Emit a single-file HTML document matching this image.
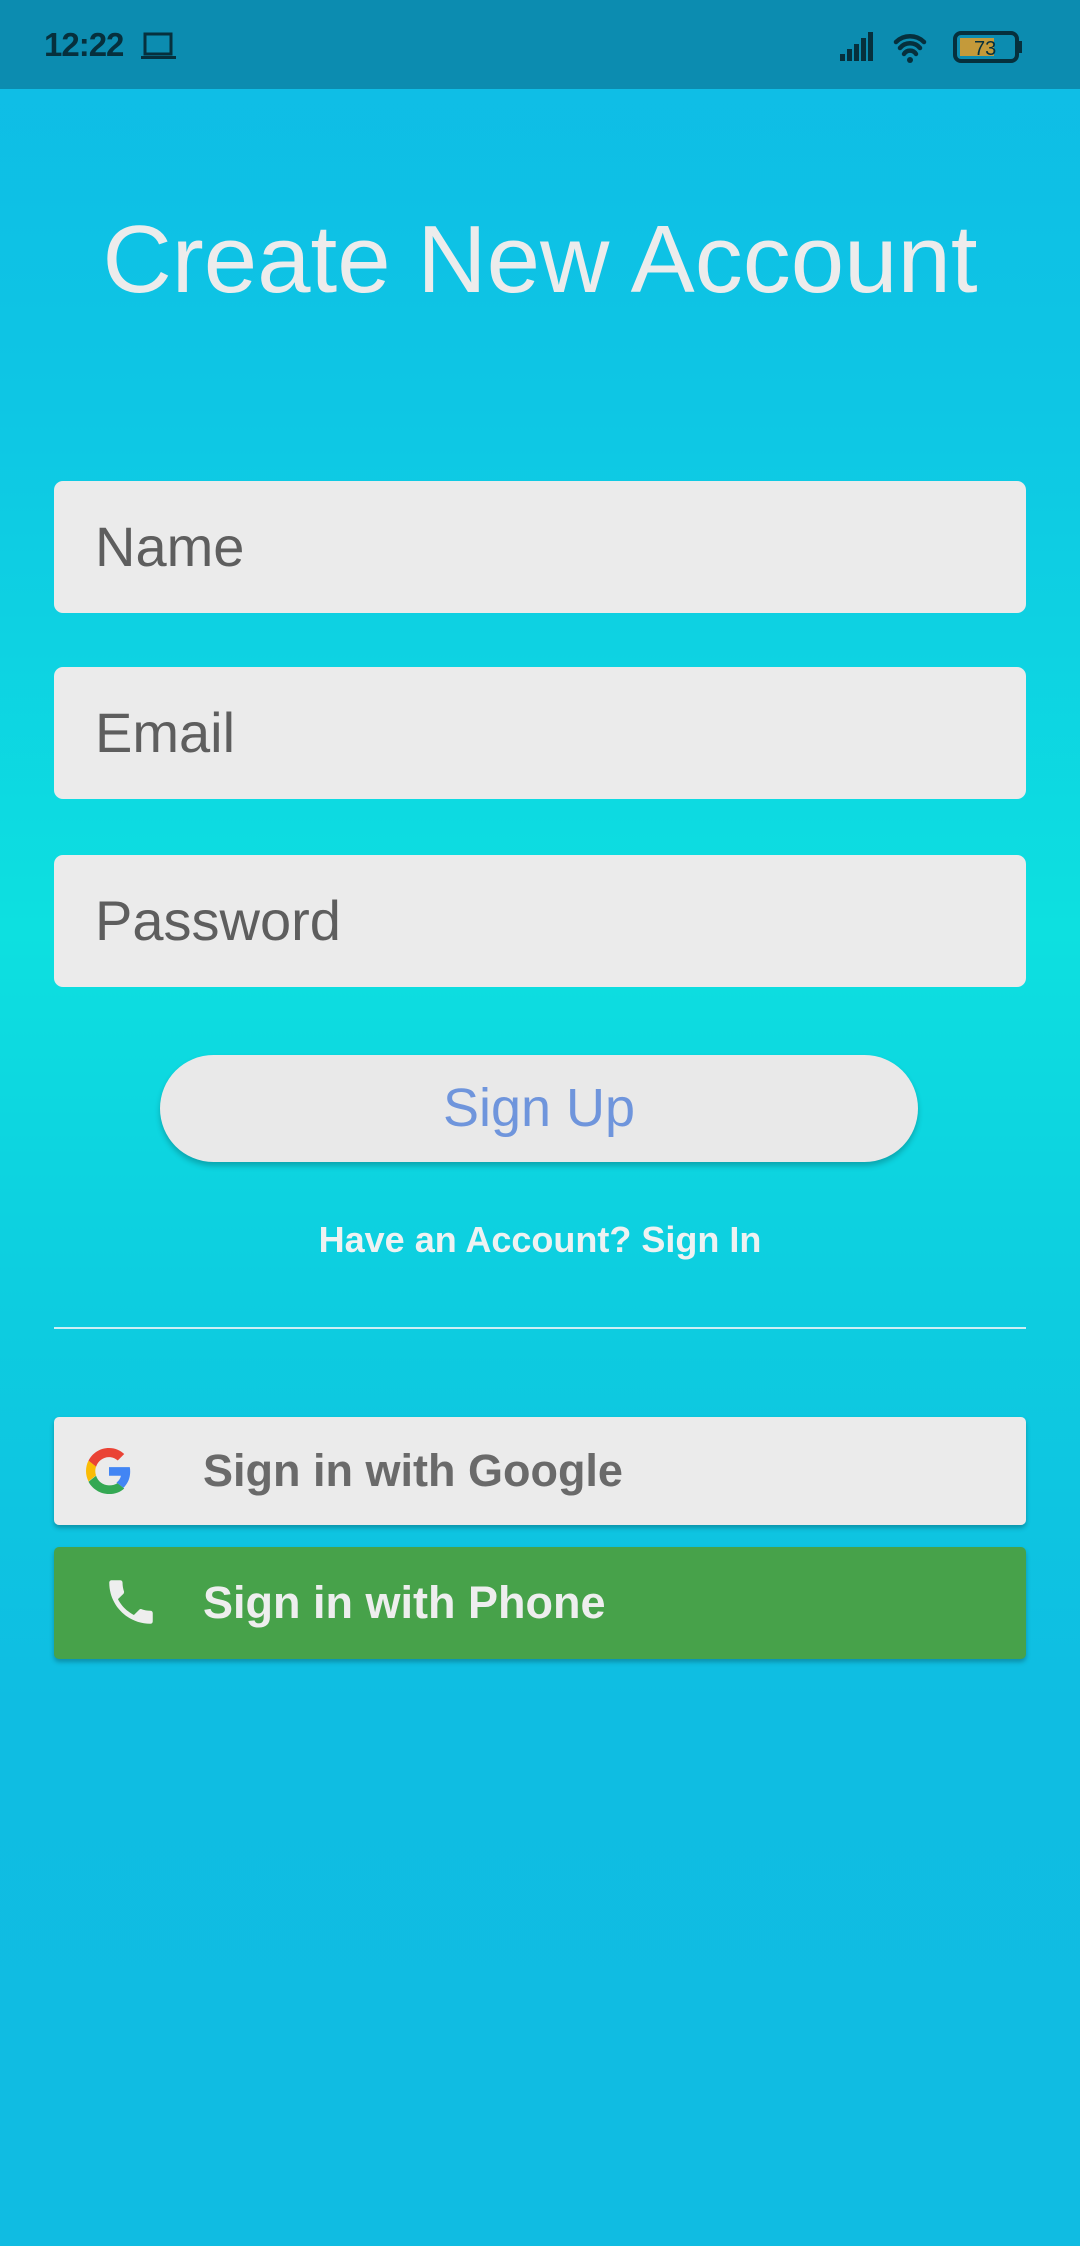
<!DOCTYPE html>
<html><head><meta charset="utf-8"><style>
*{margin:0;padding:0;box-sizing:border-box}
body{width:1080px;height:2246px;overflow:hidden;font-family:"Liberation Sans",sans-serif;position:relative;
background:linear-gradient(180deg,#0fbbe6 0px,#0ec6e4 400px,#0de0e0 930px,#0dcde0 1300px,#0fbde2 1700px,#10bce2 2246px)}
.sb{position:absolute;left:0;top:0;width:1080px;height:89px;background:#0c8cb0}
.abs{position:absolute}
.field{position:absolute;left:54px;width:972px;height:132px;background:#ebebeb;border-radius:9px;font-size:56px;color:#5e5e5e;padding-left:41px;line-height:132px}
.btn{position:absolute;left:54px;width:972px;border-radius:5px;box-shadow:0 3px 5px rgba(0,0,0,.25);font-size:45px;font-weight:bold}
</style></head><body>
<div class="sb">
<div class="abs" style="left:44px;top:26px;font-size:33px;font-weight:bold;color:#06303d;letter-spacing:-1px">12:22</div>
<svg class="abs" style="left:140px;top:32px" width="38" height="30" viewBox="0 0 38 30"><rect x="5" y="2" width="26" height="20" fill="none" stroke="#06303d" stroke-width="3"/><rect x="1" y="24" width="35" height="3" fill="#06303d"/></svg>
<svg class="abs" style="left:838px;top:30px" width="185" height="34" viewBox="0 0 185 34">
<g fill="#06303d"><rect x="2" y="24" width="5" height="7"/><rect x="9" y="19" width="5" height="12"/><rect x="16" y="14" width="5" height="17"/><rect x="23" y="8" width="5" height="23"/><rect x="30" y="2" width="5" height="29"/></g>
<path d="M58 12 a20 20 0 0 1 28 0 M62 18 a13 13 0 0 1 20 0 M66 24 a7 7 0 0 1 12 0" stroke="#06303d" stroke-width="4.5" fill="none" stroke-linecap="round"/><circle cx="72" cy="30" r="3" fill="#06303d"/>
<rect x="117" y="3" width="62" height="28" rx="6" fill="none" stroke="#06303d" stroke-width="4"/><rect x="122" y="8" width="34" height="18" fill="#c49a3a"/><rect x="181" y="11" width="3" height="12" fill="#06303d"/>
<text x="136" y="25" font-size="20" fill="#06303d" font-family="Liberation Sans">73</text></svg>
</div>
<div class="abs" style="left:0;width:1080px;top:200px;text-align:center;font-size:96px;color:#ececec;line-height:120px">Create New Account</div>
<div class="field" style="top:481px">Name</div>
<div class="field" style="top:667px">Email</div>
<div class="field" style="top:855px">Password</div>
<div class="abs" style="left:160px;top:1055px;width:758px;height:107px;border-radius:54px;background:#e9e9e9;box-shadow:0 4px 6px rgba(0,0,0,.22);text-align:center;line-height:107px;font-size:54px;color:#6f95dc">Sign Up</div>
<div class="abs" style="left:0;width:1080px;top:1219px;text-align:center;font-size:36px;font-weight:bold;color:#eef2f2">Have an Account? Sign In</div>
<div class="abs" style="left:54px;top:1327px;width:972px;height:2px;background:#cdeff5"></div>
<div class="btn" style="top:1417px;height:108px;background:#ebebeb;color:#6a6a6a">
<svg class="abs" style="left:32px;top:31px" width="46" height="46" viewBox="0 0 48 48"><path fill="#EA4335" d="M24 9.5c3.5 0 6.6 1.2 9.1 3.6l6.8-6.8C35.8 2.4 30.2 0 24 0 14.6 0 6.6 5.4 2.6 13.3l7.9 6.2C12.4 13.7 17.7 9.5 24 9.5z"/><path fill="#4285F4" d="M46.1 24.5c0-1.6-.1-3.1-.4-4.5H24v9h12.4c-.5 2.9-2.2 5.3-4.6 7l7.2 5.6c4.2-3.9 7.1-9.7 7.1-17.1z"/><path fill="#FBBC05" d="M10.5 28.6c-.5-1.4-.8-3-.8-4.6s.3-3.2.8-4.6l-7.9-6.2C.9 16.5 0 20.1 0 24s.9 7.5 2.6 10.8l7.9-6.2z"/><path fill="#34A853" d="M24 48c6.5 0 11.9-2.1 15.9-5.8l-7.2-5.6c-2.2 1.5-5 2.4-8.7 2.4-6.3 0-11.6-4.200-13.5-10l-7.9 6.2C6.6 42.6 14.6 48 24 48z"/></svg>
<div class="abs" style="left:149px;top:0;line-height:108px">Sign in with Google</div></div>
<div class="btn" style="top:1547px;height:112px;background:#47a24a;color:#eeeeee">
<svg class="abs" style="left:48px;top:26px" width="58" height="58" viewBox="0 0 24 24"><path fill="#eeeeee" d="M6.6 10.8c1.4 2.8 3.8 5.1 6.6 6.6l2.2-2.2c.3-.3.7-.4 1-.2 1.1.4 2.300.6 3.6.6.6 0 1 .4 1 1V20c0 .6-.4 1-1 1C10.6 21 3 13.4 3 4c0-.6.5-1 1-1h3.5c.6 0 1 .4 1 1 0 1.3.2 2.5.6 3.6.1.3 0 .7-.2 1L6.6 10.8z"/></svg>
<div class="abs" style="left:149px;top:0;line-height:112px">Sign in with Phone</div></div>
</body></html>
